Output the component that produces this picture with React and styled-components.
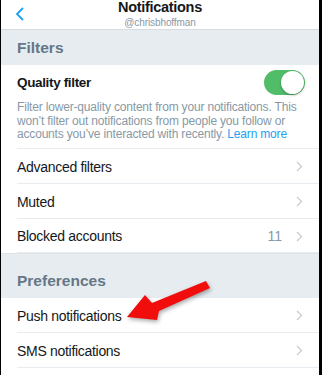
import React from "react";
import styled, { createGlobalStyle } from "styled-components";

const GlobalStyle = createGlobalStyle`
  html, body {
    margin: 0;
    padding: 0;
    background: #000;
  }
  body {
    font-family: "Liberation Sans", Arial, sans-serif;
    -webkit-font-smoothing: antialiased;
  }
`;

const Screen = styled.div`
  position: relative;
  width: 322px;
  height: 375px;
  box-sizing: border-box;
  border-left: 1px solid #000;
  border-right: 3px solid #000;
  background: #fff;
  overflow: hidden;
`;

const Header = styled.div`
  position: relative;
  height: 29px;
  border-bottom: 1px solid #d6dce0;
  display: flex;
  flex-direction: column;
  align-items: center;
`;

const BackButton = styled.div`
  position: absolute;
  left: 14px;
  top: 7px;
  width: 10px;
  height: 14px;
  display: flex;
`;

const Title = styled.div`
  margin-top: 0;
  font-size: 14.5px;
  line-height: 14px;
  font-weight: bold;
  letter-spacing: -0.3px;
  color: #14171a;
`;

const Subtitle = styled.div`
  margin-top: 3px;
  font-size: 10px;
  line-height: 11px;
  letter-spacing: -0.1px;
  color: #8899a6;
`;

const SectionHeader = styled.div`
  height: ${(p) => p.$height}px;
  box-sizing: border-box;
  background: #e6ecf0;
  border-top: ${(p) => (p.$bordered ? "1px solid #dde3e7" : "none")};
  display: flex;
  align-items: flex-end;
  padding: 0 0 9px 16px;
  font-size: 15.5px;
  line-height: 17px;
  font-weight: bold;
  color: #657786;
`;

const Row = styled.div`
  position: relative;
  height: ${(p) => p.$height || 35}px;
  box-sizing: border-box;
  display: flex;
  align-items: center;
  padding: 0 16px 0 16px;
  &::after {
    content: "";
    position: absolute;
    left: 16px;
    right: 0;
    bottom: 0;
    height: 1px;
    background: #e6ecf0;
  }
`;

const RowLabel = styled.div`
  flex: 1;
  font-size: 14px;
  letter-spacing: -0.3px;
  color: #14171a;
`;

const Count = styled.span`
  font-size: 14px;
  color: #8899a6;
  margin-right: 14px;
`;

const QualityBlock = styled.div`
  position: relative;
  padding: 4px 14px 0 16px;
  height: 84px;
  box-sizing: border-box;
  &::after {
    content: "";
    position: absolute;
    left: 16px;
    right: 0;
    bottom: 0;
    height: 1px;
    background: #e6ecf0;
  }
`;

const QualityTop = styled.div`
  display: flex;
  align-items: center;
  justify-content: space-between;
  height: 26px;
`;

const QualityLabel = styled.div`
  font-size: 13.5px;
  font-weight: bold;
  letter-spacing: -0.35px;
  color: #14171a;
`;

const Toggle = styled.div`
  position: relative;
  width: 41px;
  height: 25px;
  border-radius: 13px;
  background: #52bd68;
  &::after {
    content: "";
    position: absolute;
    right: 1px;
    top: 1px;
    width: 23px;
    height: 23px;
    border-radius: 50%;
    background: #fff;
    box-shadow: 0 1px 3px rgba(0, 0, 0, 0.3);
  }
`;

const Description = styled.div`
  margin-top: 6px;
  margin-right: -10px;
  font-size: 12px;
  line-height: 13.5px;
  letter-spacing: -0.18px;
  color: #8899a6;
  white-space: nowrap;
`;

const Link = styled.span`
  color: #1da1f2;
`;

const ArrowLayer = styled.svg`
  position: absolute;
  left: 0;
  top: 0;
  pointer-events: none;
  filter: drop-shadow(1px 2px 2px rgba(0, 0, 0, 0.35));
`;

const Chevron = () => (
  <svg width="7" height="11" viewBox="0 0 7 11">
    <path d="M1 1 L5.5 5.5 L1 10" fill="none" stroke="#c4ccd2" strokeWidth="1.2" />
  </svg>
);

const BackIcon = () => (
  <svg width="10" height="14" viewBox="0 0 10 14">
    <path d="M8 1 L2 7 L8 13" fill="none" stroke="#1da1f2" strokeWidth="1.8" />
  </svg>
);

const App = () => {
  return (
    <>
      <GlobalStyle />
      <Screen>
        <Header>
          <BackButton>
            <BackIcon />
          </BackButton>
          <Title>Notifications</Title>
          <Subtitle>@chrisbhoffman</Subtitle>
        </Header>

        <SectionHeader $height={35}>Filters</SectionHeader>
        <QualityBlock>
          <QualityTop>
            <QualityLabel>Quality filter</QualityLabel>
            <Toggle />
          </QualityTop>
          <Description>
            Filter lower-quality content from your notifications. This
            <br />
            won’t filter out notifications from people you follow or
            <br />
            accounts you’ve interacted with recently. <Link>Learn more</Link>
          </Description>
        </QualityBlock>
        <Row>
          <RowLabel>Advanced filters</RowLabel>
          <Chevron />
        </Row>
        <Row>
          <RowLabel>Muted</RowLabel>
          <Chevron />
        </Row>
        <Row $height={34}>
          <RowLabel>Blocked accounts</RowLabel>
          <Count>11</Count>
          <Chevron />
        </Row>

        <SectionHeader $height={45} $bordered>
          Preferences
        </SectionHeader>
        <Row>
          <RowLabel>Push notifications</RowLabel>
          <Chevron />
        </Row>
        <Row>
          <RowLabel>SMS notifications</RowLabel>
          <Chevron />
        </Row>

        <ArrowLayer width="322" height="375" viewBox="0 0 322 375">
          <polygon
            points="126,317 144,295 151,303 205,281 209,288 158,311 156,320"
            fill="#f20d0d"
          />
        </ArrowLayer>
      </Screen>
    </>
  );
};

export default App;
